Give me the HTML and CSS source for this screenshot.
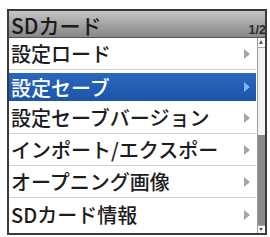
FILE: index.html
```html
<!DOCTYPE html>
<html lang="ja">
<head>
<meta charset="utf-8">
<link rel="stylesheet" href="styles.css">
</head>
<body>
<div class="frame">
  <div class="header">
    <span class="title">SDカード</span>
    <span class="page">1/2</span>
  </div>
  <div class="body">
    <ul class="list">
      <li class="row"><span class="label">設定ロード</span><span class="arrow"></span></li>
      <li class="row selected"><span class="label">設定セーブ</span><span class="arrow"></span></li>
      <li class="row"><span class="label">設定セーブバージョン</span><span class="arrow"></span></li>
      <li class="row"><span class="label">インポート/エクスポー</span><span class="arrow"></span></li>
      <li class="row"><span class="label">オープニング画像</span><span class="arrow"></span></li>
      <li class="row last"><span class="label">SDカード情報</span><span class="arrow"></span></li>
    </ul>
    <div class="scrollbar">
      <div class="sb-up"></div>
      <div class="sb-track"><div class="sb-thumb"></div></div>
      <div class="sb-down"></div>
    </div>
  </div>
</div>
</body>
</html>
```
FILE: styles.css
```css
html, body {
  margin: 0;
  padding: 0;
  background: #ffffff;
}
body {
  padding: 9px 0 0 7px;
  font-family: "Noto Sans CJK JP", "Noto Sans", sans-serif;
  color: #1c1c1c;
}
.frame {
  width: 260px;
  height: 226px;
  box-sizing: border-box;
  border: 2px solid #3a3a3a;
  display: flex;
  flex-direction: column;
  background: #fff;
}
.header {
  height: 26px;
  flex: none;
  display: flex;
  align-items: flex-end;
  justify-content: space-between;
  background: linear-gradient(to bottom, #c6c6c6 0%, #a0a0a0 55%, #888888 100%);
  border-bottom: 1px solid #555;
  padding: 0 0 0 2px;
}
.title {
  font-size: 21px;
  line-height: 27px;
  font-weight: 500;
  color: #1a1a1a;
  margin-bottom: -2px;
}
.page {
  font-family: "Liberation Sans", sans-serif;
  font-size: 12.5px;
  font-weight: bold;
  color: #2a2a2a;
  line-height: 14px;
  margin-right: -1px;
}
.body {
  flex: 1;
  display: flex;
  min-height: 0;
}
.list {
  list-style: none;
  margin: 0;
  padding: 0;
  flex: 1;
  display: flex;
  flex-direction: column;
}
.row {
  height: 32px;
  box-sizing: border-box;
  border-bottom: 1px solid #cfcfcf;
  display: flex;
  align-items: center;
  justify-content: space-between;
  padding: 0 6px 0 2px;
  font-size: 20px;
  font-weight: 500;
}
.row.last {
  border-bottom: none;
  height: 33px;
}
.label {
  white-space: nowrap;
}
.arrow {
  width: 0;
  height: 0;
  border-top: 5px solid transparent;
  border-bottom: 5px solid transparent;
  border-left: 6px solid #a6a6a6;
}
.row.selected {
  color: #fff;
  background: linear-gradient(to bottom, #2a68bf, #1a55a8);
  background-clip: padding-box;
  border-top: 3px solid #fff;
  border-bottom-color: #fff;
}
.row.selected .arrow {
  border-left-color: #7fb3ef;
}
.scrollbar {
  width: 7px;
  flex: none;
  margin-left: 1px;
  display: flex;
  flex-direction: column;
  border-left: 1px solid #9a9a9a;
  background: #e6e6e6;
}
.sb-up {
  height: 9px;
  flex: none;
  position: relative;
  background: #fafafa;
  border-bottom: 1px solid #aaa;
}
.sb-up::after {
  content: "";
  position: absolute;
  left: 1px;
  top: 2px;
  border-left: 2.5px solid transparent;
  border-right: 2.5px solid transparent;
  border-bottom: 4px solid #555;
}
.sb-track {
  flex: 1;
  display: flex;
  flex-direction: column;
  justify-content: flex-end;
  background: #f2f2f2;
}
.sb-thumb {
  height: 90px;
  background: #8a8a8a;
}
.sb-down {
  height: 7px;
  flex: none;
  position: relative;
  background: #fafafa;
  border-top: 1px solid #aaa;
}
.sb-down::after {
  content: "";
  position: absolute;
  left: 1px;
  top: 2px;
  border-left: 2.5px solid transparent;
  border-right: 2.5px solid transparent;
  border-top: 3px solid #555;
}
```
